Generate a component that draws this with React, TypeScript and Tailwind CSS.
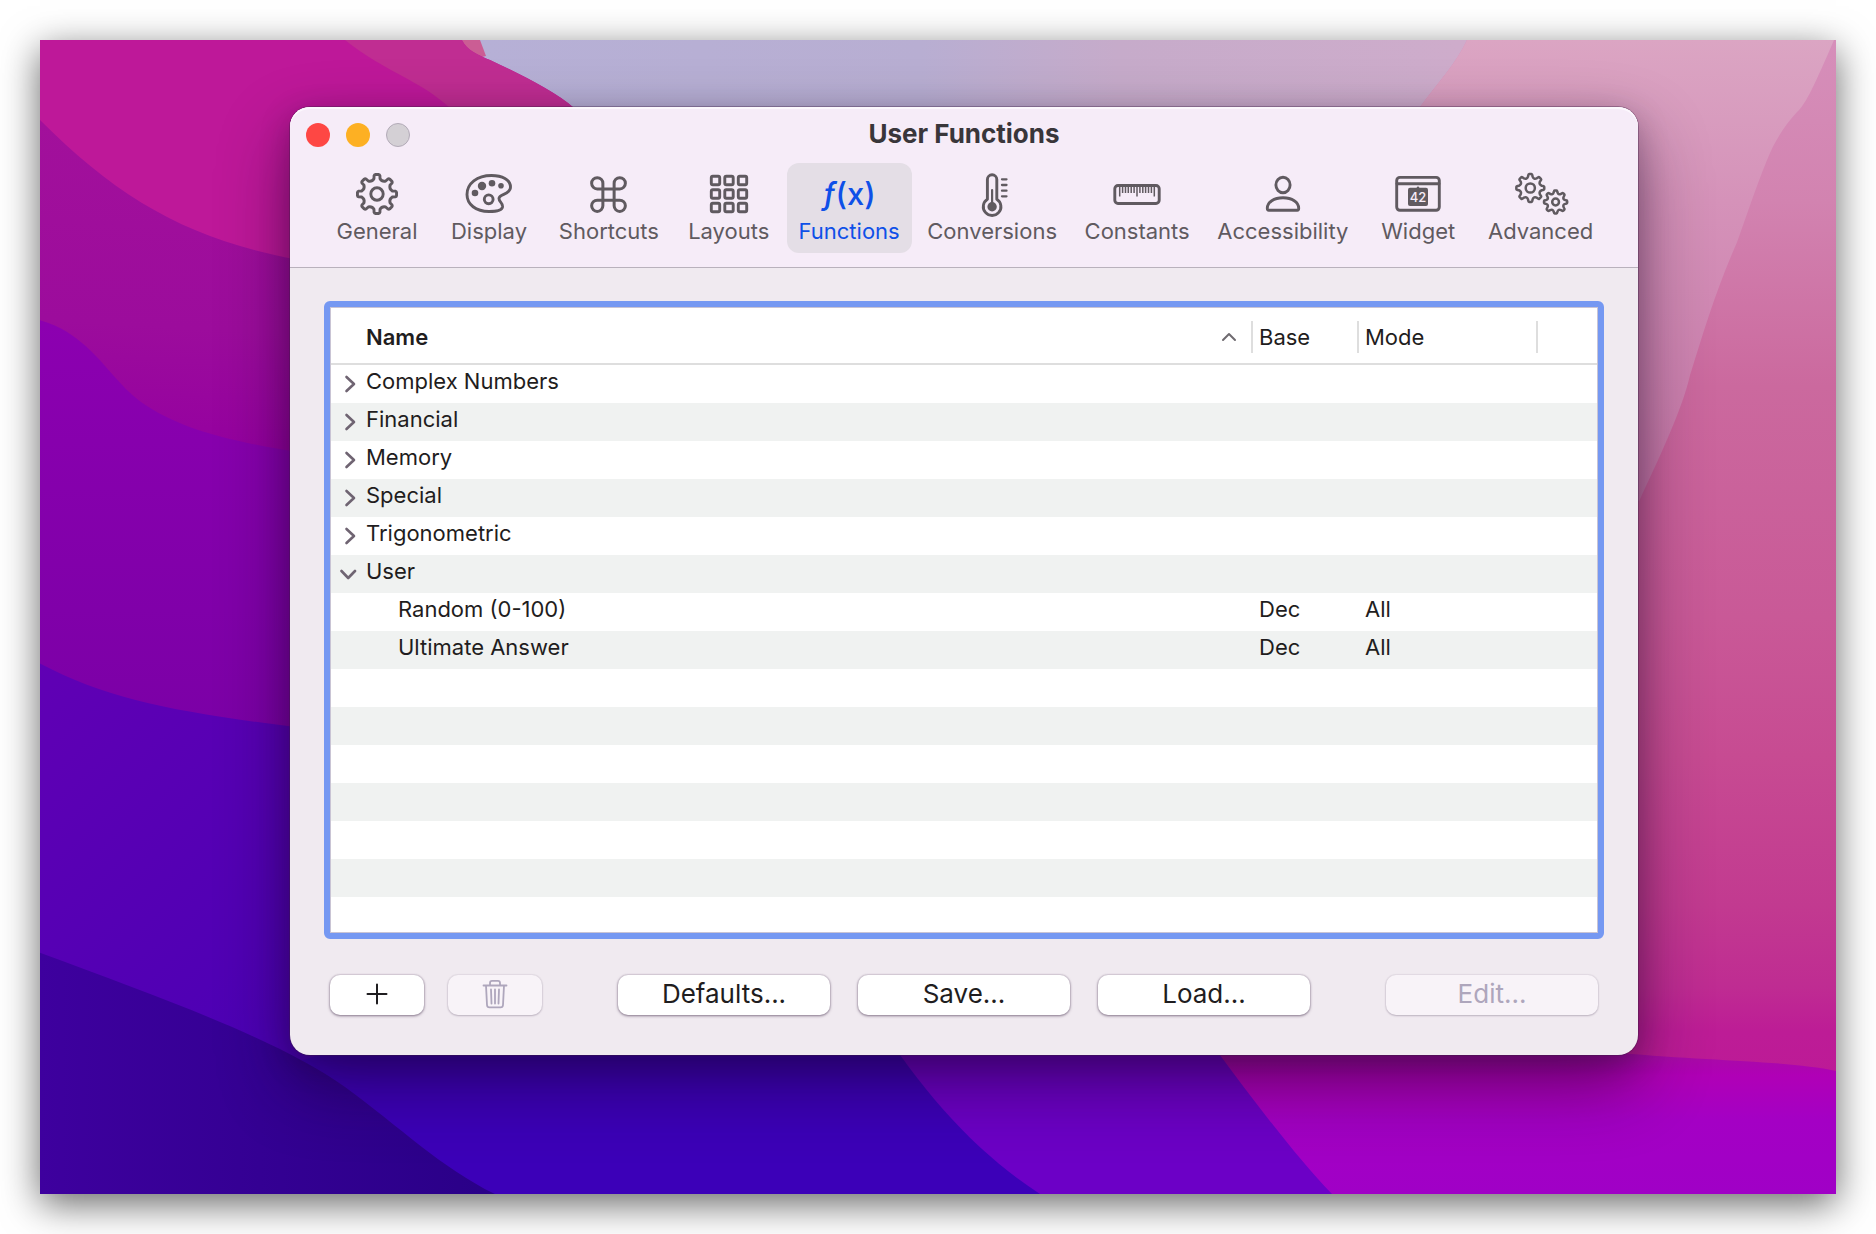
import { useState, type ReactNode } from "react";
import { Command } from "lucide-react";

interface FunctionItem {
  name: string;
  base: string;
  mode: string;
}

interface FunctionGroup {
  name: string;
  items: FunctionItem[];
}

const groups: FunctionGroup[] = [
  { name: "Complex Numbers", items: [] },
  { name: "Financial", items: [] },
  { name: "Memory", items: [] },
  { name: "Special", items: [] },
  { name: "Trigonometric", items: [] },
  {
    name: "User",
    items: [
      { name: "Random (0-100)", base: "Dec", mode: "All" },
      { name: "Ultimate Answer", base: "Dec", mode: "All" },
    ],
  },
];

const MIN_ROWS = 15;

// Closed outline of a cog with rounded valleys between its teeth
function gearPath(cx: number, cy: number, outer: number, root: number, teeth = 8) {
  const step = 360 / teeth;
  const pt = (r: number, deg: number) => {
    const a = ((deg - 90) * Math.PI) / 180;
    return `${(cx + r * Math.cos(a)).toFixed(2)} ${(cy + r * Math.sin(a)).toFixed(2)}`;
  };
  let d = "";
  for (let i = 0; i < teeth; i++) {
    const a = i * step;
    d += `${i === 0 ? "M" : "L"}${pt(root + 1, a - step * 0.25)}`;
    d += `L${pt(outer - 1, a - step * 0.2)}Q${pt(outer, a - step * 0.17)} ${pt(outer, a - step * 0.1)}`;
    d += `L${pt(outer, a + step * 0.1)}Q${pt(outer, a + step * 0.17)} ${pt(outer - 1, a + step * 0.2)}`;
    d += `L${pt(root + 1, a + step * 0.25)}Q${pt(root - 1.5, a + step * 0.5)} ${pt(root + 1, a + step * 0.75)}`;
  }
  return d + "Z";
}

function Icon({ width = 48, children }: { width?: number; children: ReactNode }) {
  return (
    <svg
      width={width}
      height="48"
      viewBox={`0 0 ${width} 48`}
      fill="none"
      stroke="currentColor"
      strokeWidth="2.9"
      strokeLinecap="round"
      strokeLinejoin="round"
      aria-hidden="true"
    >
      {children}
    </svg>
  );
}

function GeneralIcon() {
  return (
    <Icon>
      <path d={gearPath(24, 24, 19.6, 14.6)} />
      <circle cx="24" cy="24" r="6.2" />
    </Icon>
  );
}

function DisplayIcon() {
  return (
    <Icon>
      <path d="M26.5 5.5C37 5.5 45.5 9.5 45.5 17C45.5 25 34 23.5 34 28.5C34 32 38 32.5 37.5 37C37 40.5 30 41.5 24 41.5C11 41.5 2 34.5 2 24.5C2 13.5 12 5.5 26.5 5.5Z" />
      <circle cx="23.7" cy="29.3" r="4.4" />
      <g fill="currentColor" stroke="none">
        <circle cx="10" cy="23" r="3.3" />
        <circle cx="17" cy="16" r="4.2" />
        <circle cx="27" cy="13.3" r="3.3" />
        <circle cx="36" cy="15.7" r="2.8" />
      </g>
    </Icon>
  );
}

function LayoutsIcon() {
  return (
    <Icon>
      {[6.3, 19.8, 33.3].map((y) =>
        [6.3, 19.8, 33.3].map((x) => <rect key={`${x}-${y}`} x={x} y={y} width="8.4" height="8.4" rx="1.5" />)
      )}
    </Icon>
  );
}

function ConversionsIcon() {
  return (
    <Icon>
      <path d="M19.4 9.5a4.7 4.7 0 0 1 9.4 0V29.2a8.8 8.8 0 1 1-9.4 0Z" />
      <circle cx="24.1" cy="36.7" r="4.7" fill="currentColor" stroke="none" />
      <path d="M24.1 20V35" strokeWidth="2.2" />
      <path d="M34 9.3H38.5M34 15H38.5M34 20.7H38.5M34 26.3H38.5" strokeWidth="2.3" />
    </Icon>
  );
}

function ConstantsIcon() {
  return (
    <Icon>
      <rect x="1.8" y="15.5" width="44.4" height="18" rx="3.2" />
      <path
        d="M6.7 17V26.5M9.6 17V23M12.5 17V23M15.3 17V23M18.2 17V23M21.1 17V23M24 17V26.5M26.9 17V23M29.8 17V23M32.6 17V23M35.5 17V23M38.4 17V23M41.3 17V26.5"
        strokeWidth="1.5"
        strokeLinecap="butt"
      />
    </Icon>
  );
}

function AccessibilityIcon() {
  return (
    <Icon>
      <ellipse cx="24" cy="15" rx="7.1" ry="7.7" />
      <path d="M9.8 40.3H38.2Q39.7 40.3 39.7 38.3C39.7 32 33 27.8 24 27.8S8.3 32 8.3 38.3Q8.3 40.3 9.8 40.3Z" />
    </Icon>
  );
}

function WidgetIcon() {
  return (
    <Icon>
      <rect x="2.7" y="7.4" width="42.6" height="32.9" rx="3.2" />
      <path d="M3 13.7H45" />
      <rect x="14" y="17.8" width="20" height="18.2" rx="2" fill="currentColor" stroke="none" />
      <circle cx="24" cy="17.6" r="1.2" fill="currentColor" stroke="none" />
      <text
        x="24"
        y="31.8"
        textAnchor="middle"
        fontSize="13"
        fontWeight="500"
        fill="#f6ecf8"
        stroke="none"
      >
        42
      </text>
    </Icon>
  );
}

function AdvancedIcon() {
  return (
    <Icon width={60}>
      <g strokeWidth="2.5">
        <path d={gearPath(19.3, 18, 14, 10.6)} />
        <circle cx="19.3" cy="18" r="4.6" />
        <path d={gearPath(44.6, 32, 11.6, 8.8)} />
        <circle cx="44.6" cy="32" r="3.4" />
      </g>
    </Icon>
  );
}

const tabs: { label: string; icon: ReactNode }[] = [
  { label: "General", icon: <GeneralIcon /> },
  { label: "Display", icon: <DisplayIcon /> },
  { label: "Shortcuts", icon: <Command size={45} strokeWidth={1.6} /> },
  { label: "Layouts", icon: <LayoutsIcon /> },
  { label: "Functions", icon: <span className="text-[31px] font-medium"><i>ƒ</i>(x)</span> },
  { label: "Conversions", icon: <ConversionsIcon /> },
  { label: "Constants", icon: <ConstantsIcon /> },
  { label: "Accessibility", icon: <AccessibilityIcon /> },
  { label: "Widget", icon: <WidgetIcon /> },
  { label: "Advanced", icon: <AdvancedIcon /> },
];

function Wallpaper() {
  return (
    <svg
      className="absolute inset-0 h-full w-full"
      viewBox="40 40 1796 1153"
      preserveAspectRatio="none"
      aria-hidden="true"
    >
      <defs>
        <linearGradient id="sky" x1="480" x2="1460" y1="0" y2="0" gradientUnits="userSpaceOnUse">
          <stop offset="0" stopColor="#b6b0d6" />
          <stop offset="0.45" stopColor="#b8aed2" />
          <stop offset="0.65" stopColor="#c6abca" />
          <stop offset="1" stopColor="#ceaccb" />
        </linearGradient>
        <linearGradient id="pink" x1="0" x2="0" y1="40" y2="1193" gradientUnits="userSpaceOnUse">
          <stop offset="0" stopColor="#d68fba" />
          <stop offset="0.14" stopColor="#d283b0" />
          <stop offset="0.3" stopColor="#cb699e" />
          <stop offset="0.5" stopColor="#c95997" />
          <stop offset="0.62" stopColor="#c74b92" />
          <stop offset="0.75" stopColor="#c23a90" />
          <stop offset="0.82" stopColor="#bf2c92" />
          <stop offset="0.86" stopColor="#bd1c96" />
          <stop offset="1" stopColor="#bb1499" />
        </linearGradient>
        <linearGradient id="haze" x1="0" x2="0" y1="40" y2="500" gradientUnits="userSpaceOnUse">
          <stop offset="0" stopColor="#dba5c3" />
          <stop offset="0.35" stopColor="#d592b9" />
          <stop offset="1" stopColor="#c777a8" />
        </linearGradient>
        <linearGradient id="plum" x1="40" x2="20" y1="120" y2="450" gradientUnits="userSpaceOnUse">
          <stop offset="0" stopColor="#a2109b" />
          <stop offset="0.6" stopColor="#9c0c9c" />
          <stop offset="1" stopColor="#9400a0" />
        </linearGradient>
        <linearGradient id="violet" x1="0" x2="0" y1="320" y2="730" gradientUnits="userSpaceOnUse">
          <stop offset="0" stopColor="#8c00b0" />
          <stop offset="1" stopColor="#7b00a6" />
        </linearGradient>
        <linearGradient id="indigo" x1="40" x2="500" y1="663" y2="1193" gradientUnits="userSpaceOnUse">
          <stop offset="0" stopColor="#6000b4" />
          <stop offset="0.5" stopColor="#5000b4" />
          <stop offset="1" stopColor="#3c00b8" />
        </linearGradient>
        <linearGradient id="navy" x1="40" x2="480" y1="0" y2="0" gradientUnits="userSpaceOnUse">
          <stop offset="0" stopColor="#3e009e" />
          <stop offset="1" stopColor="#2a0088" />
        </linearGradient>
        <linearGradient id="grape" x1="0" x2="0" y1="1045" y2="1193" gradientUnits="userSpaceOnUse">
          <stop offset="0" stopColor="#a3109e" />
          <stop offset="0.2" stopColor="#b000b6" />
          <stop offset="0.5" stopColor="#a400c4" />
          <stop offset="1" stopColor="#a000c6" />
        </linearGradient>
      </defs>
      <rect x="40" y="40" width="1796" height="1153" fill="url(#pink)" />
      <path d="M460 40H1467C1456 64 1438 82 1420 107L1400 200H560Z" fill="url(#sky)" />
      <path d="M1467 40H1834C1815 84 1806 104 1797 112C1784 126 1774 142 1767 160C1754 192 1746 218 1737 242C1716 290 1704 330 1690 375C1682 410 1658 460 1639 501L1400 200L1420 107C1438 82 1456 64 1467 40Z" fill="url(#haze)" />
      <path d="M462 40H480L486 56L470 60Z" fill="#cb5d94" />
      <path d="M40 40H462C466 50 480 56 490 60C520 74 556 92 574 108V400H40Z" fill="#be1899" />
      <path d="M345 40H462C466 50 480 56 490 60C520 74 556 92 574 108H450C420 80 385 72 345 40Z" fill="#c02d92" />
      <path d="M40 120C120 200 190 240 300 260V500H40Z" fill="url(#plum)" />
      <path d="M40 320C62 326 74 336 86 346C106 364 120 386 140 401C180 430 236 442 300 452V760H40Z" fill="url(#violet)" />
      <path d="M40 663C110 700 180 712 300 727L1300 1000L1220 1193H40Z" fill="url(#indigo)" />
      <path d="M500 1000H1000V1193H480L300 1060Z" fill="#3c00b8" />
      <path d="M40 952C170 1000 280 1040 345 1086C400 1126 440 1166 495 1193H40Z" fill="url(#navy)" />
      <path d="M864 1000C920 1090 974 1150 1040 1193H1340L1200 1000Z" fill="#6c00c6" />
      <path d="M1180 1000C1236 1076 1290 1150 1332 1193H1836V1070C1790 1060 1710 1060 1620 1052V1000Z" fill="url(#grape)" />
    </svg>
  );
}

function Disclosure({ name, open, onToggle }: { name: string; open: boolean; onToggle: () => void }) {
  return (
    <button
      onClick={onToggle}
      aria-expanded={open}
      aria-label={name}
      className="flex h-[38px] w-[35px] shrink-0 items-center justify-center text-[#6f6472]"
    >
      <svg width="18" height="18" viewBox="0 0 18 18" fill="none" stroke="currentColor" strokeWidth="2.6" strokeLinecap="round" strokeLinejoin="round">
        <path d={open ? "M1.5 6L8.2 13L15 6" : "M6.5 2L14 9L6.5 16"} />
      </svg>
    </button>
  );
}

function FunctionsTable() {
  const [open, setOpen] = useState<string[]>(["User"]);

  const toggle = (name: string) =>
    setOpen((prev) => (prev.includes(name) ? prev.filter((n) => n !== name) : [...prev, name]));

  const visible = groups.reduce((n, g) => n + 1 + (open.includes(g.name) ? g.items.length : 0), 0);
  const fillers = Math.max(0, MIN_ROWS - visible);

  return (
    <div className="h-[638px] overflow-hidden rounded-md border-[6px] border-[#7598f2] bg-white">
      <div className="h-full overflow-hidden border border-[#c9c4d4]">
        <table className="w-full table-fixed border-collapse text-left text-[22px] leading-7 text-[#1f1d20]">
          <colgroup>
            <col />
            <col className="w-[106px]" />
            <col className="w-[179px]" />
            <col className="w-[61px]" />
          </colgroup>
          <thead>
            <tr className="h-14 border-b-2 border-[#dedede]">
              <th className="p-0 pt-[2px] font-semibold" aria-sort="ascending">
                <div className="flex items-center justify-between pr-[14px] pl-[35px]">
                  Name
                  <svg width="16" height="12" viewBox="0 0 16 12" fill="none" stroke="#6f6b70" strokeWidth="2" strokeLinecap="round" strokeLinejoin="round" aria-hidden="true">
                    <path d="M2 9L8 3L14 9" />
                  </svg>
                </div>
              </th>
              <th className="p-0 pt-[2px] font-normal">
                <div className="flex h-8 items-center border-l-2 border-[#dedede] pl-[6px]">Base</div>
              </th>
              <th className="p-0 pt-[2px] font-normal">
                <div className="flex h-8 items-center border-l-2 border-[#dedede] pl-[6px]">Mode</div>
              </th>
              <td className="p-0 pt-[2px]">
                <div className="h-8 border-l-2 border-[#dedede]" />
              </td>
            </tr>
          </thead>
          <tbody>
            {groups.flatMap((group) => {
              const isOpen = open.includes(group.name);
              return [
                <tr key={group.name} className="h-[38px] even:bg-[#f0f2f1]">
                  <td className="p-0" colSpan={4}>
                    <div className="flex h-[38px]">
                      <Disclosure name={group.name} open={isOpen} onToggle={() => toggle(group.name)} />
                      <span className="pt-[2px]">{group.name}</span>
                    </div>
                  </td>
                </tr>,
                ...(isOpen ? group.items : []).map((item) => (
                  <tr key={item.name} className="h-[38px] even:bg-[#f0f2f1]">
                    <td className="pt-[2px] pb-2 pl-[67px]">{item.name}</td>
                    <td className="pt-[2px] pb-2 pl-2">{item.base}</td>
                    <td className="pt-[2px] pb-2 pl-2">{item.mode}</td>
                    <td />
                  </tr>
                )),
              ];
            })}
            {Array.from({ length: fillers }, (_, i) => (
              <tr key={`filler-${i}`} className="h-[38px] even:bg-[#f0f2f1]">
                <td colSpan={4} />
              </tr>
            ))}
          </tbody>
        </table>
      </div>
    </div>
  );
}

function PushButton({ children, label, disabled, small }: { children: ReactNode; label?: string; disabled?: boolean; small?: boolean }) {
  return (
    <button
      disabled={disabled}
      aria-label={label}
      className={`flex h-10 items-center justify-center rounded-[10px] pb-[2px] text-[26px] leading-8 ${small ? "w-[94px]" : "w-[212px]"} ${
        disabled
          ? "bg-[#f8f3f8] text-[#aea6bc] shadow-[0_0_1px_1px_rgba(80,60,90,0.08),0_1px_2px_rgba(80,60,90,0.25)]"
          : "bg-white text-[#1f1d20] shadow-[0_0_1px_1px_rgba(80,60,90,0.12),0_1px_3px_rgba(60,40,70,0.55)]"
      }`}
    >
      {children}
    </button>
  );
}

export default function App() {
  const [active, setActive] = useState("Functions");

  return (
    <div className="min-h-screen bg-white p-10 font-['Inter',sans-serif]">
      <div className="relative shadow-[0_10px_36px_rgba(0,0,0,0.6)]">
        <Wallpaper />
        <div className="relative overflow-hidden pt-[67px] pr-[198px] pb-[139px] pl-[250px]">
          <main className="rounded-[20px] bg-[#f0eaf0] shadow-[0_0_0_1px_rgba(60,30,70,0.35),0_30px_70px_rgba(20,0,30,0.45),0_8px_30px_rgba(20,0,30,0.25)]">
            <header className="rounded-t-[20px] border-b border-[#b9b1bc] bg-[#f6ecf8] pb-[14px] shadow-[inset_0_2px_0_#fcf8fd]">
              <div className="grid h-14 grid-cols-[1fr_auto_1fr] items-center px-4">
                <div className="flex gap-4">
                  <button aria-label="Close" className="size-6 rounded-full bg-[#fe4744]" />
                  <button aria-label="Minimize" className="size-6 rounded-full bg-[#fdb023]" />
                  <button aria-label="Zoom" disabled className="size-6 rounded-full border border-[#b3abb8] bg-[#d4d0d5]" />
                </div>
                <h1 className="pb-[2px] text-[26px] leading-8 font-bold text-[#39363a]">User Functions</h1>
              </div>
              <nav className="flex gap-1 px-[33px]">
                {tabs.map(({ label, icon }) => (
                  <button
                    key={label}
                    onClick={() => setActive(label)}
                    className={`flex h-[90px] min-w-[108px] flex-col items-center rounded-xl px-3 pt-[7px] ${
                      active === label ? "bg-[#e4dee6] text-[#0f50e8]" : "text-[#605a60]"
                    }`}
                  >
                    <span className="flex h-12 items-center">{icon}</span>
                    <span className="text-[22px] leading-[26px]">{label}</span>
                  </button>
                ))}
              </nav>
            </header>

            <div className="px-[34px] pt-[33px] pb-10">
              <FunctionsTable />
              <div className="mt-9 flex justify-between px-[6px]">
                <div className="flex gap-6">
                  <PushButton small label="Add function">
                    <svg width="22" height="22" viewBox="0 0 22 22" stroke="currentColor" strokeWidth="2" strokeLinecap="round">
                      <path d="M11 1.5V20.5M1.5 11H20.5" />
                    </svg>
                  </PushButton>
                  <PushButton small disabled label="Delete function">
                    <svg width="26" height="30" viewBox="0 0 26 30" fill="none" stroke="currentColor" strokeWidth="1.8" strokeLinecap="round" strokeLinejoin="round">
                      <path d="M1.5 6.5H24.5M8 6V4Q8 1.8 10 1.8H16Q18 1.8 18 4V6M4 6.5L5 26Q5.2 28.4 7.5 28.4H18.5Q20.8 28.4 21 26L22 6.5M9 10.5L9.5 24.5M13 10.5V24.5M17 10.5L16.5 24.5" />
                    </svg>
                  </PushButton>
                </div>
                <div className="flex gap-7">
                  <PushButton>Defaults...</PushButton>
                  <PushButton>Save...</PushButton>
                  <PushButton>Load...</PushButton>
                </div>
                <PushButton disabled>Edit...</PushButton>
              </div>
            </div>
          </main>
        </div>
      </div>
    </div>
  );
}
